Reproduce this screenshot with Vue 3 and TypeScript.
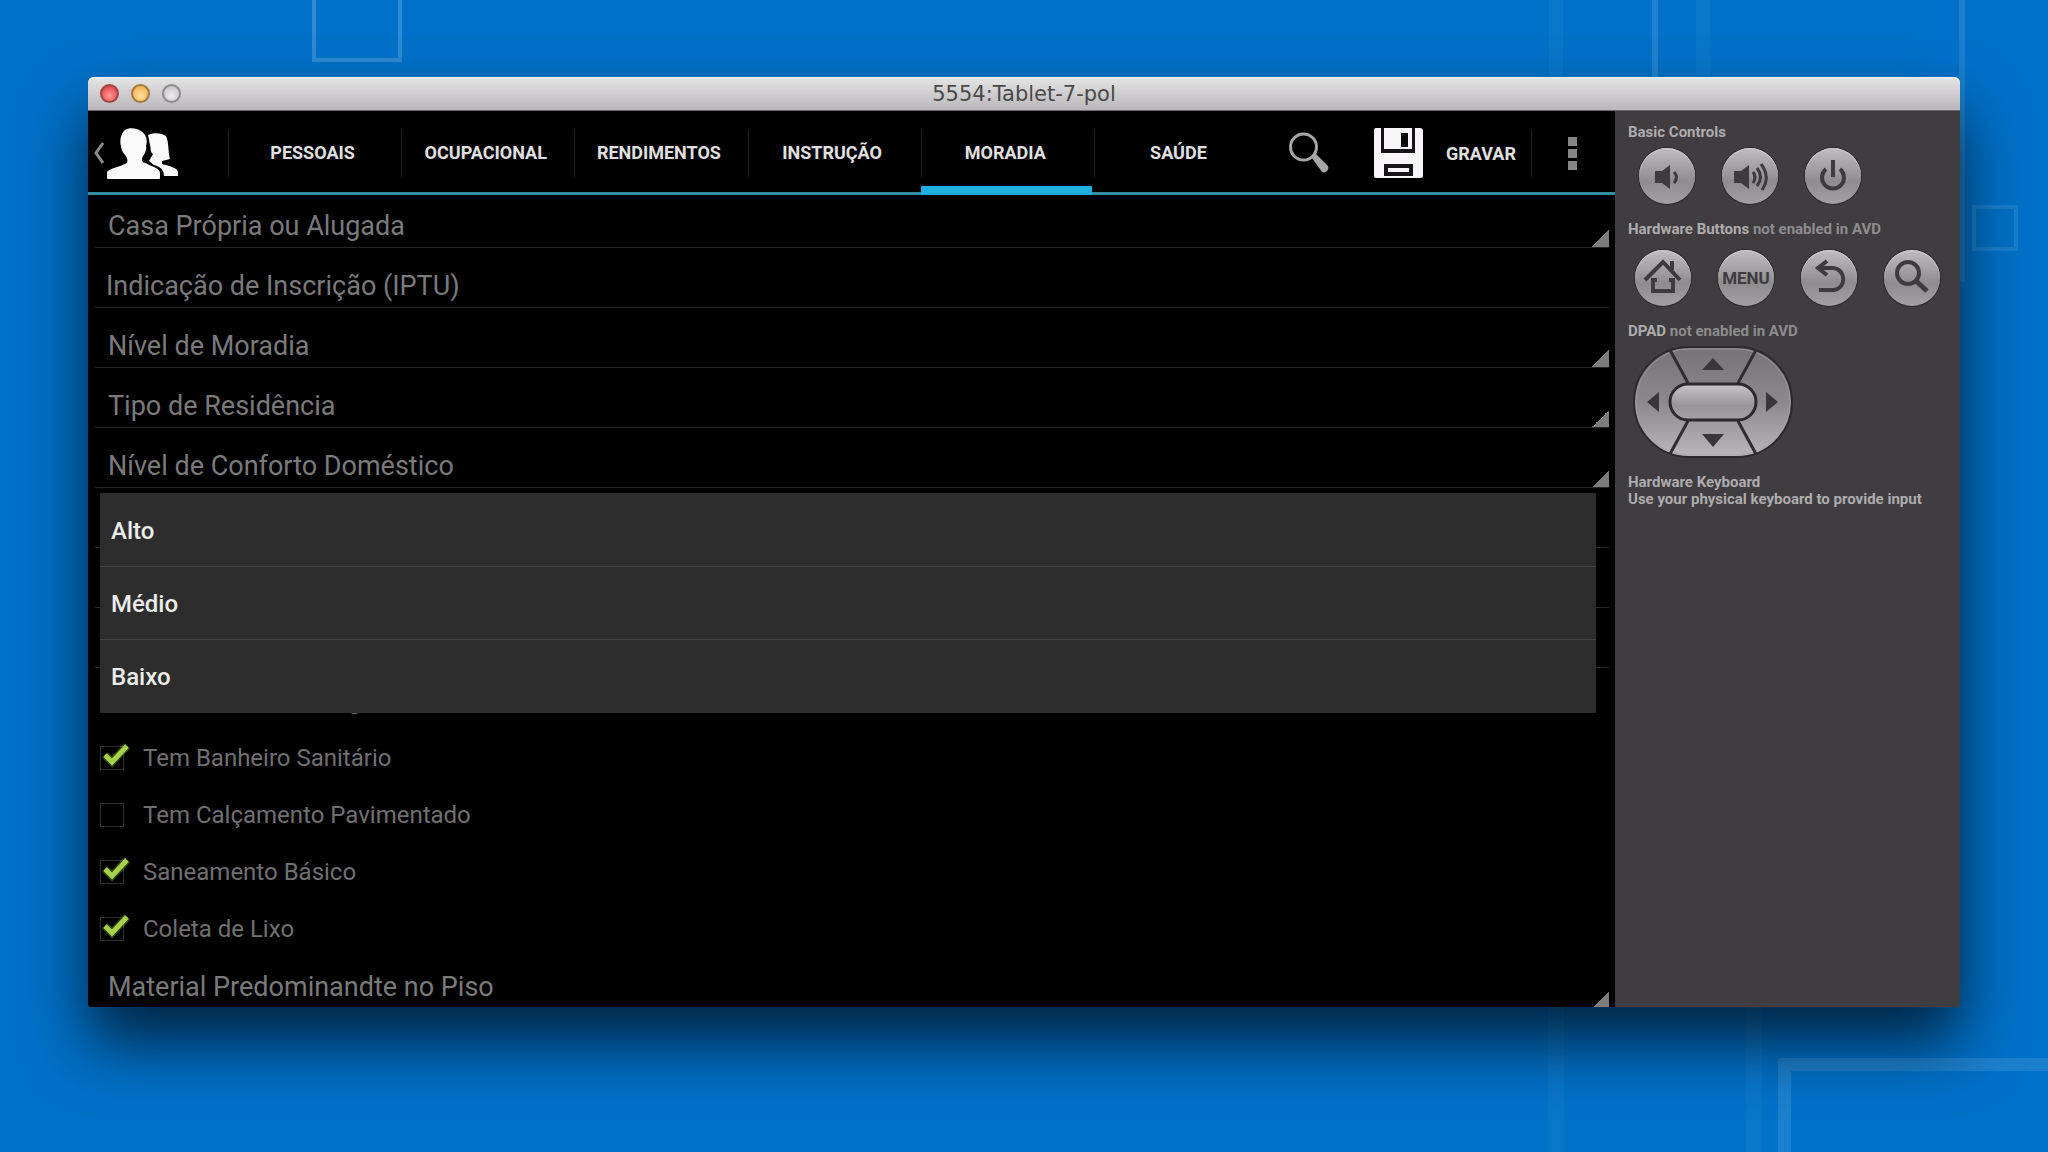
<script setup lang="ts">
import { ref } from 'vue'

interface Field {
  id: string
  label: string
  kind: 'select' | 'text'
}

interface Check {
  id: string
  label: string
  on: boolean
}

const tabs: string[] = ['PESSOAIS', 'OCUPACIONAL', 'RENDIMENTOS', 'INSTRUÇÃO', 'MORADIA', 'SAÚDE']
const activeTab = ref('MORADIA')

const fields: Field[] = [
  { id: 'casa', label: 'Casa Própria ou Alugada', kind: 'select' },
  { id: 'iptu', label: 'Indicação de Inscrição (IPTU)', kind: 'text' },
  { id: 'nivel', label: 'Nível de Moradia', kind: 'select' },
  { id: 'tipo', label: 'Tipo de Residência', kind: 'select' },
  { id: 'conforto', label: 'Nível de Conforto Doméstico', kind: 'select' },
  { id: 'extra1', label: '', kind: 'text' },
  { id: 'extra2', label: '', kind: 'text' },
  { id: 'extra3', label: '', kind: 'text' },
]

const openField = ref('conforto')
const options: string[] = ['Alto', 'Médio', 'Baixo']

const checks = ref<Check[]>([
  { id: 'energia', label: 'Tem Acesso a Energia', on: false },
  { id: 'banheiro', label: 'Tem Banheiro Sanitário', on: true },
  { id: 'calcamento', label: 'Tem Calçamento Pavimentado', on: false },
  { id: 'saneamento', label: 'Saneamento Básico', on: true },
  { id: 'lixo', label: 'Coleta de Lixo', on: true },
])
</script>

<template>
  <div class="desktop">
    <div class="decor" aria-hidden="true">
      <i class="box box-top"></i>
      <i class="bar bar-a"></i>
      <i class="bar bar-b"></i>
      <i class="bar bar-c"></i>
      <i class="bar bar-d"></i>
      <i class="bar bar-e"></i>
      <i class="bar bar-f"></i>
      <i class="box box-side"></i>
      <i class="box box-corner"></i>
    </div>

    <main class="window">
      <header class="titlebar">
        <div class="lights">
          <button class="light red" aria-label="Fechar"></button>
          <button class="light amber" aria-label="Minimizar"></button>
          <button class="light grey" aria-label="Ampliar"></button>
        </div>
        <h1>5554:Tablet-7-pol</h1>
      </header>

      <div class="body">
        <section class="screen">
          <nav class="actionbar">
            <button class="home" aria-label="Voltar">
              <svg class="chevron" width="12" height="22" viewBox="0 0 12 22">
                <path d="M10 1 L3 11 L10 21" fill="none" stroke="#8b8b8b" stroke-width="3" />
              </svg>
              <svg width="72" height="51" viewBox="0 0 72 51" fill="#fafafa">
                <path d="M0 50V44C2 40 14 39 20 35C21 32 20 29 18 27C15 24 14 20 14 18C12 12 15 4 18 2C22 -1 30 0 34 3C39 6 41 12 39 18C40 20 38 26 36 28C34 32 35 34 38 35C44 38 53 40 53 45V50Q53 51 52 51H1Q0 51 0 50Z" />
                <path d="M41 7C47 4 55 5 59 8C62 14 61 24 63 31L55 33V36C62 38 71 40 71 44V48H57C57 42 54 39 47 37L42 33L46 26C43 24 44 20 43 17Z" />
              </svg>
            </button>
            <button
              v-for="t in tabs"
              :key="t"
              class="tab"
              :class="{ active: t === activeTab }"
              @click="activeTab = t"
            >{{ t }}</button>
            <div class="actions">
              <button class="icon-btn" aria-label="Buscar">
                <svg width="40" height="42" viewBox="0 0 40 42">
                  <circle cx="14.500" cy="15" r="13" fill="none" stroke="#a6a6a6" stroke-width="3" />
                  <path d="M23 26l4-4 12 12c1 2 0 4-1 5s-3 2-5 1z" fill="#a6a6a6" />
                </svg>
              </button>
              <button class="save">
                <svg width="49" height="50" viewBox="0 0 49 50">
                  <path d="M2 0H7V25H41V0H47L49 2V48Q49 50 47 50H2Q0 50 0 48V2Q0 0 2 0Z" fill="#f7f5f7" />
                  <path d="M10 0H38V21H10Z" fill="#f7f5f7" />
                  <path d="M7 0H10V21H38V0H41V25H7Z" fill="#161416" />
                  <rect x="27" y="5" width="7" height="14" fill="#0a0a0a" />
                  <rect x="12" y="38" width="25" height="8" fill="#f7f5f7" stroke="#161416" stroke-width="4" />
                </svg>
                <span>GRAVAR</span>
              </button>
              <button class="more" aria-label="Mais opções"><i></i><i></i><i></i></button>
            </div>
          </nav>

          <form class="form" @submit.prevent>
            <div class="fields">
              <div v-for="f in fields" :key="f.id" class="field" :class="f.kind">
                <select v-if="f.kind === 'select'" :aria-label="f.label">
                  <option>{{ f.label }}</option>
                </select>
                <input v-else type="text" :placeholder="f.label" :aria-label="f.label || f.id" />
                <ul v-if="openField === f.id" class="popup" role="listbox" :aria-label="f.label">
                  <li v-for="o in options" :key="o" role="option">{{ o }}</li>
                </ul>
              </div>
            </div>

            <div class="checks">
              <label v-for="c in checks" :key="c.id" class="check">
                <input v-model="c.on" type="checkbox" />
                <span class="mark">
                  <svg v-if="c.on" width="32" height="28" viewBox="0 0 32 28">
                    <path d="M4 13L11 20L26 4" fill="none" stroke="#5f9a10" stroke-opacity=".45" stroke-width="8" />
                    <path d="M4 13L11 20L26 4" fill="none" stroke="#a9d04a" stroke-width="5" />
                  </svg>
                </span>
                <span>{{ c.label }}</span>
              </label>
            </div>

            <div class="field select">
              <select aria-label="Material Predominandte no Piso">
                <option>Material Predominandte no Piso</option>
              </select>
            </div>
          </form>
        </section>

        <aside class="controls">
          <section>
            <h2>Basic Controls</h2>
            <div class="row basic">
              <button class="round" aria-label="Volume down">
                <svg width="56" height="56" viewBox="0 0 56 56" fill="#3d3b3e">
                  <path d="M16 23H23L31 17V41L23 35H16Z" />
                  <path d="M35 24Q40 29 35 35" fill="none" stroke="#3d3b3e" stroke-width="3" />
                </svg>
              </button>
              <button class="round" aria-label="Volume up">
                <svg width="56" height="56" viewBox="0 0 56 56" fill="#3d3b3e">
                  <path d="M12 23H19L27 17V41L19 35H12Z" />
                  <path d="M31 24Q35 29 31 35M35 20Q42 29 35 38M39 16Q49 29 40 42" fill="none" stroke="#3d3b3e" stroke-width="3" />
                </svg>
              </button>
              <button class="round" aria-label="Power">
                <svg width="56" height="56" viewBox="0 0 56 56" fill="none" stroke="#3d3b3e" stroke-width="4">
                  <path d="M21 21A11 11 0 1 0 35 21M28 12V29" />
                </svg>
              </button>
            </div>
          </section>
          <section>
            <h2>Hardware Buttons <span>not enabled in AVD</span></h2>
            <div class="row hardware">
              <button class="round" aria-label="Home">
                <svg width="56" height="56" viewBox="0 0 56 56" fill="none" stroke="#3d3b3e" stroke-width="4">
                  <path d="M10 30L28 12L45 30M37 20V11M22 30H18V41H38V30H34" />
                </svg>
              </button>
              <button class="round menu">MENU</button>
              <button class="round" aria-label="Back">
                <svg width="56" height="56" viewBox="0 0 56 56" fill="none" stroke="#3d3b3e" stroke-width="4">
                  <path d="M26 11L17 18L26 25M17 18H32C45 19 46 38 33 40H18" />
                </svg>
              </button>
              <button class="round" aria-label="Search">
                <svg width="56" height="56" viewBox="0 0 56 56" fill="none" stroke="#3d3b3e" stroke-width="4">
                  <circle cx="24" cy="23" r="11" />
                  <path d="M32 31L43 41" stroke-width="5" />
                </svg>
              </button>
            </div>
          </section>
          <section>
            <h2>DPAD <span>not enabled in AVD</span></h2>
            <svg class="dpad" width="160" height="112" viewBox="0 0 160 112" role="img" aria-label="DPAD">
              <defs>
                <linearGradient id="pad" x1="0" y1="0" x2="0" y2="1">
                  <stop offset="0" stop-color="#757375" />
                  <stop offset=".5" stop-color="#8b898b" />
                  <stop offset="1" stop-color="#b9b7b9" />
                </linearGradient>
                <linearGradient id="pill" x1="0" y1="0" x2="0" y2="1">
                  <stop offset="0" stop-color="#c9c7c9" />
                  <stop offset=".6" stop-color="#979597" />
                  <stop offset="1" stop-color="#a5a3a5" />
                </linearGradient>
              </defs>
              <rect x="1" y="1" width="158" height="110" rx="55" fill="url(#pad)" stroke="#2b292b" stroke-width="2" />
              <rect x="3" y="3" width="154" height="106" rx="53" fill="none" stroke="#a5a3a5" stroke-opacity=".7" />
              <path d="M37 4L55 37M123 4L105 37M37 108L55 75M123 108L105 75" stroke="#2f2d2f" stroke-width="3" />
              <rect x="37" y="38" width="86" height="36" rx="18" fill="url(#pill)" stroke="#2b292b" stroke-width="3" />
              <path d="M69 24L80 12L91 24ZM69 88L80 101L91 88ZM26 46L14 56L26 66ZM133 46L145 56L133 66Z" fill="#383638" />
            </svg>
          </section>
          <section>
            <h2>Hardware Keyboard</h2>
            <p>Use your physical keyboard to provide input</p>
          </section>
        </aside>
      </div>
    </main>
  </div>
</template>

<style>
body {
  margin: 0;
  background: #0071c8;
}
</style>

<style scoped>
* {
  box-sizing: border-box;
}

.desktop {
  position: relative;
  display: flex;
  height: 100vh;
  min-height: 700px;
  padding: 77px 88px 145px;
  overflow: hidden;
  background: #0071c8;
  font-family: Roboto, "Liberation Sans", sans-serif;
}

button {
  margin: 0;
  padding: 0;
  border: 0;
  background: none;
  color: inherit;
  font: inherit;
  cursor: pointer;
}

svg {
  display: block;
}

/* wallpaper shapes */
.decor {
  position: absolute;
  inset: 0;
}

.decor i {
  position: absolute;
}

.box {
  border: 4px solid rgba(255, 255, 255, 0.18);
}

.box-top {
  top: -30px;
  left: 312px;
  width: 90px;
  height: 92px;
}

.box-side {
  top: 205px;
  right: 30px;
  width: 46px;
  height: 46px;
  border-color: rgba(255, 255, 255, 0.1);
}

.box-corner {
  right: -20px;
  bottom: -20px;
  width: 290px;
  height: 114px;
  border: 13px solid rgba(255, 255, 255, 0.11);
  border-radius: 4px;
}

.bar {
  top: 0;
  width: 14px;
  height: 200px;
  background: rgba(255, 255, 255, 0.04);
}

.bar-a { right: 485px; }
.bar-b { right: 390px; width: 6px; background: rgba(255, 255, 255, 0.12); }
.bar-c { right: 338px; }
.bar-d { right: 83px; width: 6px; height: 282px; background: rgba(255, 255, 255, 0.1); }
.bar-e { top: auto; bottom: 0; right: 484px; width: 16px; }
.bar-f { top: auto; bottom: 0; right: 286px; width: 16px; }

/* emulator window */
.window {
  position: relative;
  display: flex;
  flex: 1;
  flex-direction: column;
  min-width: 0;
  border-radius: 6px 6px 3px 3px;
  box-shadow: 0 36px 64px rgba(0, 0, 0, 0.68);
}

.titlebar {
  position: relative;
  display: flex;
  flex: none;
  align-items: center;
  justify-content: center;
  height: 34px;
  border-radius: 6px 6px 0 0;
  border-bottom: 1px solid #6a6a6a;
  background: linear-gradient(#e6e5e6, #b9b7b9);
  box-shadow: inset 0 1px 0 #f4f4f4;
}

.titlebar h1 {
  margin: 0;
  padding-top: 1px;
  color: #4a4849;
  font: 400 21px/32px "DejaVu Sans", sans-serif;
}

.lights {
  position: absolute;
  left: 12px;
  display: flex;
  gap: 12px;
}

.light {
  width: 19px;
  height: 19px;
  border: 2px solid;
  border-radius: 50%;
}

.red { border-color: #a04444; background: radial-gradient(circle at 50% 65%, #ff9a94, #dd3038); }
.amber { border-color: #a37a3c; background: radial-gradient(circle at 50% 65%, #ffe09a, #eda443); }
.grey { border-color: #8d8b8d; background: radial-gradient(circle at 50% 65%, #efedef, #bbb9bb); }

.body {
  display: flex;
  flex: 1;
  min-height: 0;
  overflow: hidden;
  border-radius: 0 0 3px 3px;
}

.screen {
  display: flex;
  flex: 1;
  flex-direction: column;
  min-width: 0;
  background: #000;
}

/* action bar */
.actionbar {
  display: flex;
  flex: none;
  height: 84px;
  background: linear-gradient(#338da3, #338da3) bottom / 100% 3px no-repeat #000;
  color: #e0e0e0;
  font-size: 18px;
  font-weight: 700;
}

.home {
  display: flex;
  align-items: center;
  gap: 2px;
  width: 140px;
  padding-left: 5px;
}

.tab,
.more {
  background: linear-gradient(#222, #222) left / 1px 48px no-repeat;
}

.tab {
  flex: 1;
  min-width: 0;
  margin-right: 2px;
  padding: 0 2px 2px 0;
}

.tab.active {
  box-shadow: inset 0 -9px 0 #1fb0e0;
}

.actions {
  display: flex;
  align-items: center;
  width: 348px;
  padding-left: 22px;
}

.save {
  display: flex;
  align-items: center;
  gap: 23px;
  margin: 0 15px 0 45px;
}

.more {
  display: flex;
  flex: 1;
  flex-direction: column;
  align-items: center;
  justify-content: center;
  gap: 3px;
  height: 100%;
}

.more i {
  width: 9px;
  height: 9px;
  background: #868686;
}

/* form */
.form {
  flex: 1;
  min-height: 0;
  padding: 1px 6px 0 7px;
  overflow-y: auto;
  scrollbar-width: none;
}

.fields {
  display: flex;
  flex-direction: column;
  gap: 8px;
}

.field {
  position: relative;
  height: 52px;
  border-bottom: 1px solid #262626;
}

.field.select {
  background: linear-gradient(135deg, transparent 50%, #7d7d7d 50%) right bottom / 17px 17px no-repeat;
}

.field select,
.field input {
  display: block;
  width: 100%;
  height: 51px;
  margin: 0;
  padding: 8px 13px 0;
  border: 0;
  outline: 0;
  appearance: none;
  background: none;
  color: #7a7a7a;
  font: 400 27px/32px Roboto, sans-serif;
}

.field input {
  padding-left: 11px;
}

.field input::placeholder {
  color: #7a7a7a;
  opacity: 1;
}

.popup {
  position: absolute;
  z-index: 2;
  top: 57px;
  right: 13px;
  left: 5px;
  margin: 0;
  padding: 0 0 1px;
  background: #2d2d2d;
  color: #ececec;
  font-size: 24px;
  font-weight: 500;
  line-height: 70px;
  list-style: none;
}

.popup li {
  padding: 3px 11px 0;
}

.popup li + li {
  padding-top: 2px;
  border-top: 1px solid #434343;
}

.checks {
  padding-top: 4px;
}

.check {
  position: relative;
  display: flex;
  align-items: center;
  gap: 19px;
  height: 57px;
  padding-left: 5px;
  color: #707070;
  font-size: 24px;
}

.check input {
  position: absolute;
  left: 5px;
  width: 24px;
  height: 24px;
  margin: 0;
  opacity: 0;
}

.mark {
  flex: none;
  width: 24px;
  height: 24px;
  border: 1px solid #2f2f2f;
}

.mark svg {
  margin: -5px 0 0;
}

/* emulator controls */
.controls {
  display: flex;
  flex: none;
  flex-direction: column;
  gap: 17px;
  width: 345px;
  padding: 13px 0 0 13px;
  background: #3f3d3f;
  color: #aeacae;
  font-size: 15px;
  line-height: 17px;
}

.controls h2,
.controls p {
  margin: 0;
  font-size: 15px;
  font-weight: 700;
}

.controls h2 span {
  color: #8e8c8e;
}

.row {
  display: flex;
  gap: 27px;
}

.basic {
  padding: 7px 0 0 11px;
}

.hardware {
  padding: 12px 0 0 7px;
}

.round {
  display: flex;
  align-items: center;
  justify-content: center;
  width: 56px;
  height: 56px;
  border-radius: 50%;
  background: linear-gradient(#bfbdbf, #8e8c8e 60%, #a3a1a3);
  box-shadow: 0 0 0 1px #2c2a2c, inset 0 1px 1px #d0ced0;
}

.menu {
  color: #3d3b3e;
  font-size: 17px;
  font-weight: 700;
}

.dpad {
  margin: 6px 0 -1px 5px;
}
</style>
